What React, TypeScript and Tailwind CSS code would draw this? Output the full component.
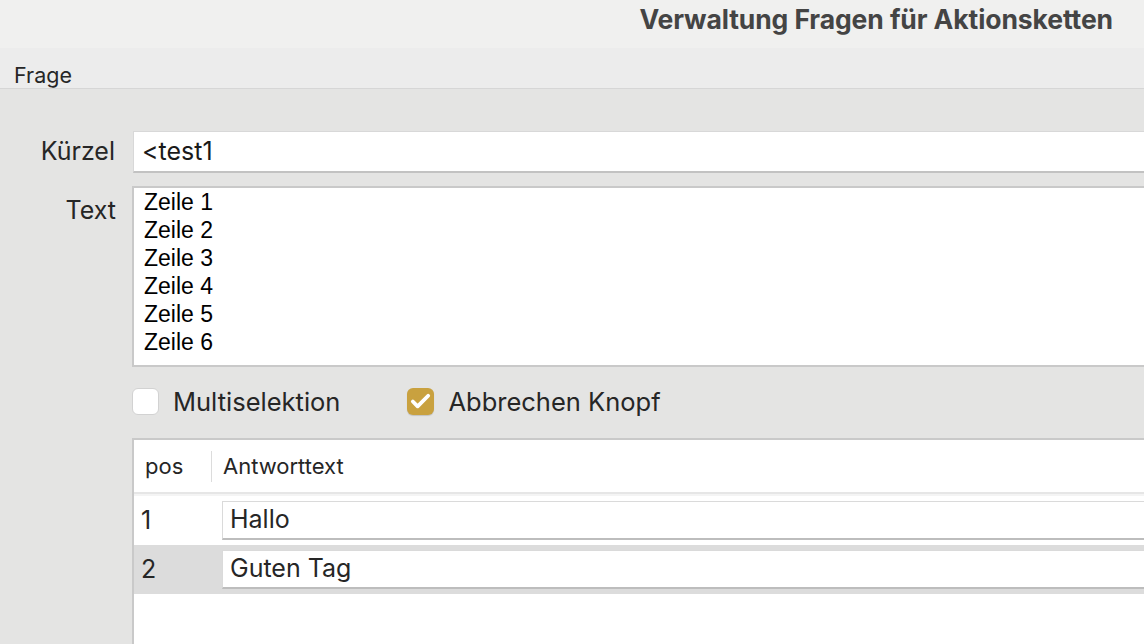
import { Check } from "lucide-react";

const sf = "font-['Inter','Noto_Sans',sans-serif]";

type Row = { pos: number; text: string; selected?: boolean };

const rows: Row[] = [
    { pos: 1, text: "Hallo" },
    { pos: 2, text: "Guten Tag", selected: true },
];

const lines = ["Zeile 1", "Zeile 2", "Zeile 3", "Zeile 4", "Zeile 5", "Zeile 6"];

function Checkbox({ checked, label }: { checked: boolean; label: string }) {
    return (
        <div className="flex h-[27px] items-center gap-[14px]">
            {checked ? (
                <div className="flex h-[27px] w-[27px] items-center justify-center rounded-[6px] bg-[#c9a13f] shadow-[0_1px_1px_rgba(0,0,0,0.15)]">
                    <Check size={23} strokeWidth={4} color="#ffffff" />
                </div>
            ) : (
                <div className="h-[27px] w-[27px] rounded-[6px] border border-[#d2d2d2] bg-white" />
            )}
            <span className="text-[25.5px] leading-none text-[#262626]">{label}</span>
        </div>
    );
}

export default function App() {
    return (
        <div className={`flex h-[644px] w-[1144px] flex-col overflow-hidden bg-[#e4e4e3] ${sf}`}>
            <div className="flex h-[48px] shrink-0 items-start justify-end bg-[#f0f0ef] pr-[31px] pt-[3px]">
                <h1 className="text-[26.5px] font-bold leading-[32px] tracking-[-0.1px] text-[#444444]">
                    Verwaltung Fragen für Aktionsketten
                </h1>
            </div>

            <div className="flex h-[41px] shrink-0 items-start border-b border-[#d6d6d6] bg-[#ececec] pl-[14px] pt-[12px]">
                <span className="text-[21.5px] leading-[30px] text-[#262626]">Frage</span>
            </div>

            <div className="flex flex-1 flex-col pt-[42px]">
                <div className="flex items-center">
                    <label className="w-[116px] pr-[1px] text-right text-[25px] text-[#262626]">Kürzel</label>
                    <div className="ml-[17px] flex h-[42px] flex-1 items-center border border-r-0 border-[#d8d8d8] border-b-2 border-b-[#c2c2c2] bg-white pl-[8px] text-[25px] text-[#1a1a1a]">
                        &lt;test1
                    </div>
                </div>

                <div className="mt-[13px] flex items-start">
                    <label className="w-[116px] pt-[6px] text-right text-[25px] text-[#262626]">Text</label>
                    <div className="ml-[16px] flex h-[181px] flex-1 flex-col border-2 border-r-0 border-[#c9c9c9] bg-white pl-[10px] font-['Liberation_Sans',Arial,sans-serif] text-[23px] leading-[28px] text-black">
                        {lines.map((l) => (
                            <div key={l}>{l}</div>
                        ))}
                    </div>
                </div>

                <div className="ml-[132px] mt-[21px] flex items-center gap-[67px]">
                    <Checkbox checked={false} label="Multiselektion" />
                    <Checkbox checked={true} label="Abbrechen Knopf" />
                </div>

                <div className="ml-[132px] mt-[23px] flex flex-1 flex-col border-l-2 border-t-2 border-[#c9c9c9] bg-white">
                    <div className="flex h-[54px] items-center border-b-2 border-[#e6e6e6] text-[22px] text-[#262626]">
                        <span className="w-[77px] pl-[11px]">pos</span>
                        <div className="h-[31px] w-[1px] bg-[#dcdcdc]" />
                        <span className="pl-[11px]">Antworttext</span>
                    </div>
                    <div className="h-[2px] bg-[#f4f4f4]" />
                    {rows.map((r) => (
                        <div
                            key={r.pos}
                            className={`flex h-[49px] items-center ${r.selected ? "bg-[#dcdcdc]" : "bg-white"}`}
                        >
                            <span className="w-[88px] pl-[7px] text-[25px] text-[#262626]">{r.pos}</span>
                            <div className="flex h-[39px] flex-1 items-center border border-r-0 border-[#dadada] border-b-2 border-b-[#bdbdbd] bg-white pl-[7px] text-[25px] text-[#262626]">
                                {r.text}
                            </div>
                        </div>
                    ))}
                </div>
            </div>
        </div>
    );
}
